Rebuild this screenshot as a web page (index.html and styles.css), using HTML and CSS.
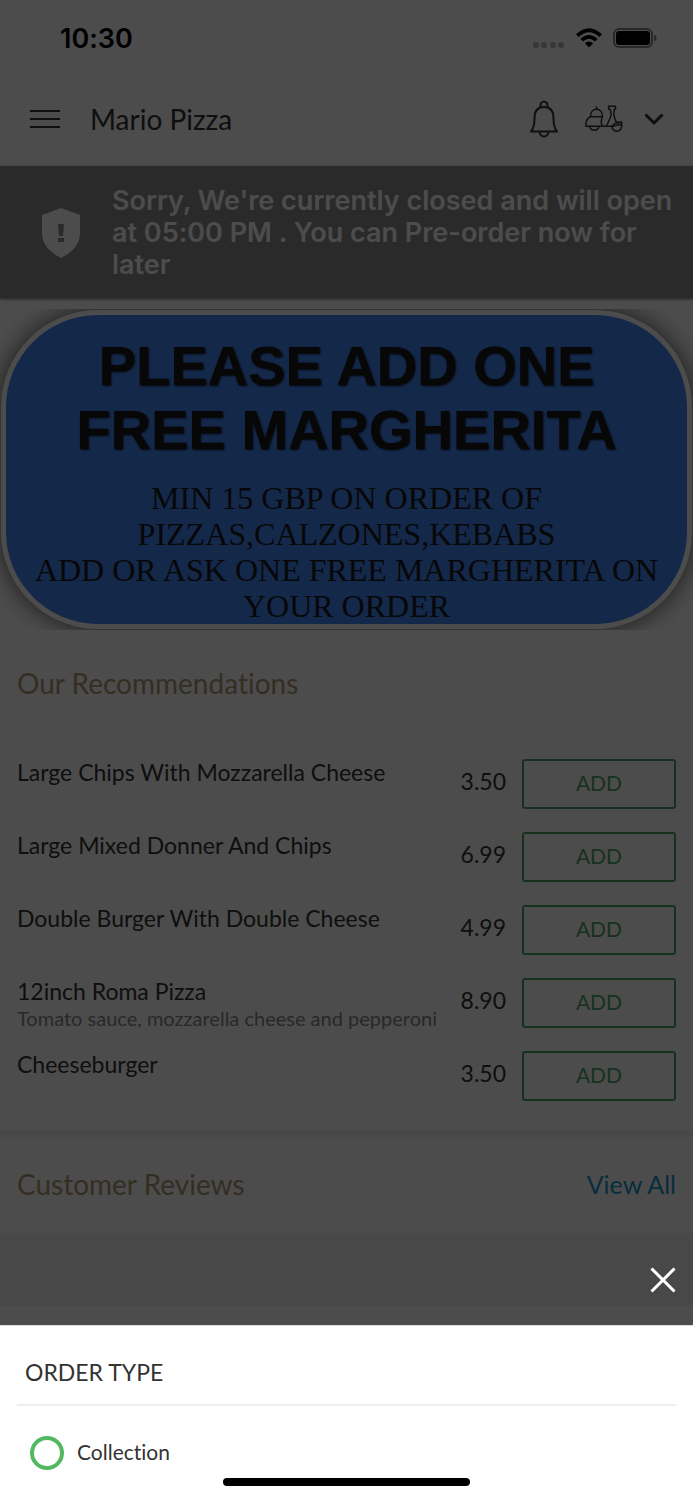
FILE: index.html
```
<!DOCTYPE html>
<html lang="en">
<head>
    <meta charset="UTF-8">
    <meta name="viewport" content="width=device-width, initial-scale=1.0">
    <title>Mario Pizza</title>
    <link rel="stylesheet" href="styles.css">
</head>
<body>
    <div class="status-bar">
        <span class="time">10:30</span>
        <div class="status-icons">
            <svg class="dots" width="32" height="6" viewBox="0 0 32 6">
                <rect x="0" y="0" width="6" height="6" rx="2"/>
                <rect x="8" y="0" width="6" height="6" rx="2"/>
                <rect x="17" y="0" width="6" height="6" rx="2"/>
                <rect x="25" y="0" width="6" height="6" rx="2"/>
            </svg>
            <svg width="26" height="20" viewBox="0 0 26 20">
                <path d="M0 6.300Q13-6 26 6.300L23.400 9Q13-.6 2.600 9Z"/>
                <path d="M4.400 10.800Q13 3 21.600 10.800L19 13.500Q13 8.200 7 13.500Z"/>
                <path d="M8.800 15.300Q13 11.600 17.200 15.300L13 19.600Z"/>
            </svg>
            <svg width="44" height="20" viewBox="0 0 44 20">
                <rect class="battery-case" x="1" y="1" width="38" height="18" rx="5"/>
                <rect x="3" y="3" width="34" height="14" rx="3"/>
                <path class="battery-tip" d="M41 6.500q2.600 1 2.600 3.500t-2.600 3.500z"/>
            </svg>
        </div>
    </div>

    <header class="header">
        <button class="icon-btn" aria-label="Menu">
            <svg width="30" height="20" viewBox="0 0 30 20">
                <path class="line" d="M0 2h30M0 10h30M0 18h30"/>
            </svg>
        </button>
        <h1 class="shop-name">Mario Pizza</h1>
        <div class="header-actions">
            <button class="icon-btn" aria-label="Notifications">
                <svg width="30" height="38" viewBox="0 0 30 38">
                    <path class="line" d="M2 31.500C5 28 5.500 24.500 5.500 18C5.500 11 9 7 15 7s9.500 4 9.500 11c0 6.500.5 10 3.500 13.500z"/>
                    <path class="line" d="M11.500 7.500V5.500a3.500 4 0 0 1 7 0v2M10.500 31.500a4.500 5 0 0 0 9 0"/>
                </svg>
            </button>
            <button class="icon-btn order-type" aria-label="Order type">
                <svg width="38" height="28" viewBox="0 0 38 28">
                    <path class="thin" d="M5.500 11.800C5.500 7 8 4.200 11.500 4.200S17.500 7 17.500 11.800zM11.500 4.200V1.500"/>
                    <path class="thin" d="M5.500 11.800C2.500 13 .8 17 .8 21.200H15.500M17.500 11.800C16 15.500 15.500 18.500 17.500 21.200"/>
                    <path class="thin" d="M4.500 21.200a4.800 4.800 0 0 0 9.500 0"/>
                    <path class="thin" d="M25.200 4.200H23.600V1.200H30.500V4.200H29.300L28.700 9.500C29.500 12 30 15.500 31.500 17.200H36.700V20C33 19 31 20.500 28.500 21.200H15.500"/>
                    <path class="thin" d="M25.200 4.200C26.500 8 26.200 11.500 24.500 14.500L21.500 21.200"/>
                    <path class="thin" d="M27 21.300a4.800 4.800 0 1 0 9.300-1.500M27 21.300C28 19 31 17.500 36.700 17.200"/>
                </svg>
                <svg width="20" height="12" viewBox="0 0 20 12">
                    <path class="chevron" d="M1.500 1.500L10 10l8.500-8.500"/>
                </svg>
            </button>
        </div>
    </header>

    <div class="notice">
        <svg width="38" height="50" viewBox="0 0 38 50">
            <path class="shield" d="M19 0L38 7V25C38 36 31 44 19 50C7 44 0 36 0 25V7Z"/>
            <path class="mark" d="M16 16h6l-1 12h-4zM16 30h6v4h-6z"/>
        </svg>
        <p>Sorry, We're currently closed and will open at 05:00 PM . You can Pre-order now for later</p>
    </div>

    <main>
        <div class="promo">
            <div class="promo-card">
                <h2>PLEASE ADD ONE<br>FREE MARGHERITA</h2>
                <p>MIN 15 GBP ON ORDER OF<br>PIZZAS,CALZONES,KEBABS<br>ADD OR ASK ONE FREE MARGHERITA ON<br>YOUR ORDER</p>
            </div>
        </div>

        <section class="recommendations">
            <h2 class="section-title">Our Recommendations</h2>
            <ul class="items">
                <li class="item">
                    <div class="item-info"><h3>Large Chips With Mozzarella Cheese</h3></div>
                    <span class="price">3.50</span>
                    <button class="add-btn">ADD</button>
                </li>
                <li class="item">
                    <div class="item-info"><h3>Large Mixed Donner And Chips</h3></div>
                    <span class="price">6.99</span>
                    <button class="add-btn">ADD</button>
                </li>
                <li class="item">
                    <div class="item-info"><h3>Double Burger With Double Cheese</h3></div>
                    <span class="price">4.99</span>
                    <button class="add-btn">ADD</button>
                </li>
                <li class="item">
                    <div class="item-info">
                        <h3>12inch Roma Pizza</h3>
                        <p>Tomato sauce, mozzarella cheese and pepperoni</p>
                    </div>
                    <span class="price">8.90</span>
                    <button class="add-btn">ADD</button>
                </li>
                <li class="item">
                    <div class="item-info"><h3>Cheeseburger</h3></div>
                    <span class="price">3.50</span>
                    <button class="add-btn">ADD</button>
                </li>
            </ul>
        </section>

        <section class="reviews">
            <h2 class="section-title">Customer Reviews</h2>
            <a class="view-all" href="#">View All</a>
        </section>
        <div class="review-strip"></div>
    </main>

    <div class="overlay">
        <button class="icon-btn close-btn" aria-label="Close">
            <svg width="26" height="26" viewBox="0 0 26 26">
                <path d="M1.500 1.500l23 23M24.500 1.500l-23 23"/>
            </svg>
        </button>
        <div class="sheet" role="dialog" aria-labelledby="sheet-title">
            <h2 id="sheet-title">ORDER TYPE</h2>
            <div class="option">
                <input type="radio" name="order-type" id="collection">
                <label for="collection">Collection</label>
            </div>
            <div class="home-indicator"></div>
        </div>
    </div>
</body>
</html>
```
FILE: styles.css
```
:root{
    --text : #333;
    --muted : #888;
    --gold : #b09a74;
    --green : #53b961;
    --button-green : #4fa668;
    --blue : #1a96d0;
    --page : #fff;
    --strip : #f0f0f0;
}

*{
    padding: 0;
    margin: 0;
    box-sizing: border-box;
}

ul{
    list-style: none;
}

a{
    text-decoration: none;
}

h1, h2, h3{
    font-weight: normal;
}

button{
    font-family: inherit;
    background: none;
    border: none;
    cursor: pointer;
}

svg{
    display: block;
    flex: none;
}

body{
    background: var(--page);
    color: var(--text);
    font-family: Lato, "Liberation Sans", sans-serif;
    font-size: 23px;
    font-variant-ligatures: none;
    min-height: 100vh;
    overflow: hidden;
}

.status-bar{
    display: flex;
    justify-content: space-between;
    align-items: center;
    height: 73px;
    padding: 4px 36px 0 60px;
    border-bottom: 1px solid #f8f8f8;
    color: #000;
}

.time{
    font-family: Inter, sans-serif;
    font-size: 27px;
    font-weight: 600;
}

.status-icons{
    display: flex;
    align-items: center;
    gap: 11px;
}

.dots{
    fill: #bbb;
    margin-top: 14px;
}

.battery-case{
    fill: none;
    stroke: #888;
    stroke-width: 2;
}

.battery-tip{
    fill: #888;
}

.header{
    display: flex;
    align-items: center;
    gap: 30px;
    height: 93px;
    padding: 0 29px 2px 30px;
}

.shop-name{
    flex: 1;
    font-size: 28px;
}

.header-actions{
    display: flex;
    align-items: center;
    gap: 26px;
}

.order-type{
    display: flex;
    align-items: center;
    gap: 21px;
}

.line, .thin, .chevron{
    fill: none;
    stroke: var(--text);
    stroke-width: 2;
    stroke-linejoin: round;
}

.thin{
    stroke-width: 1.5;
}

.chevron{
    stroke-width: 3;
}

.notice{
    display: flex;
    align-items: center;
    gap: 32px;
    padding: 19px 16px 17px 42px;
    background: #8c8c8c;
    color: #fff;
    box-shadow: 0 1px 3px #666;
    font-family: Inter, sans-serif;
    font-size: 27px;
    font-weight: 600;
    line-height: 32px;
}

.shield{
    fill: #fff;
}

.mark{
    fill: #8c8c8c;
}

.promo{
    margin-top: 11px;
    padding: 6px;
    overflow: hidden;
}

.promo-card{
    background: #4385f5;
    color: #181818;
    border-radius: 92px;
    box-shadow: 0 0 0 5px #fff, 0 0 24px 5px #555;
    padding: 19px 0 0;
    text-align: center;
}

.promo-card h2{
    font-family: "Liberation Sans", Arial, sans-serif;
    font-size: 56px;
    font-weight: bold;
    line-height: 64px;
    text-shadow: 1px 1px 2px #111;
}

.promo-card p{
    margin-top: 18px;
    font-family: "Liberation Serif", serif;
    font-size: 32px;
    line-height: 36px;
    white-space: nowrap;
}

.recommendations{
    padding: 34px 17px 6px;
    border-bottom: 7px solid var(--strip);
}

.section-title{
    color: var(--gold);
    font-size: 28px;
    line-height: 38px;
}

.items{
    margin-top: 57px;
}

.item{
    display: flex;
    align-items: flex-start;
    height: 73px;
}

.item-info{
    flex: 1;
    white-space: nowrap;
}

.item-info h3{
    font-size: 23px;
    line-height: 26px;
}

.item-info p{
    color: var(--muted);
    font-size: 20px;
    line-height: 28px;
}

.price{
    margin-right: 16px;
    line-height: 44px;
}

.add-btn{
    width: 154px;
    height: 50px;
    padding-bottom: 3px;
    border: 2px solid var(--button-green);
    border-radius: 3px;
    color: var(--button-green);
    font-size: 21px;
}

.reviews{
    display: flex;
    justify-content: space-between;
    align-items: center;
    height: 96px;
    padding: 0 17px 2px;
}

.view-all{
    color: var(--blue);
    font-size: 25px;
}

.review-strip{
    height: 73px;
    background: var(--strip);
}

.overlay{
    position: fixed;
    inset: 0;
    display: flex;
    flex-direction: column;
    justify-content: flex-end;
    background: rgba(0, 0, 0, 0.7);
}

.close-btn{
    align-self: flex-end;
    margin: 0 17px 32px 0;
}

.close-btn path{
    stroke: #fff;
    stroke-width: 3;
}

.sheet{
    background: #fff;
    border-top: 1px solid #ddd;
    padding: 0 17px 14px;
}

.sheet h2{
    padding: 31px 8px 17px;
    border-bottom: 2px solid #eee;
    font-size: 23px;
    line-height: 30px;
}

.option{
    display: flex;
    align-items: center;
    gap: 13px;
    padding: 30px 13px 8px;
}

.option input{
    appearance: none;
    width: 34px;
    height: 34px;
    border: 4px solid var(--green);
    border-radius: 50%;
}

.option input:checked{
    background: radial-gradient(var(--green) 45%, #fff 50%);
}

.option label{
    padding-bottom: 2px;
    font-size: 21px;
    line-height: 32px;
}

.home-indicator{
    width: 37.5%;
    height: 8px;
    margin: 0 auto;
    border-radius: 4px;
    background: #000;
}
```
